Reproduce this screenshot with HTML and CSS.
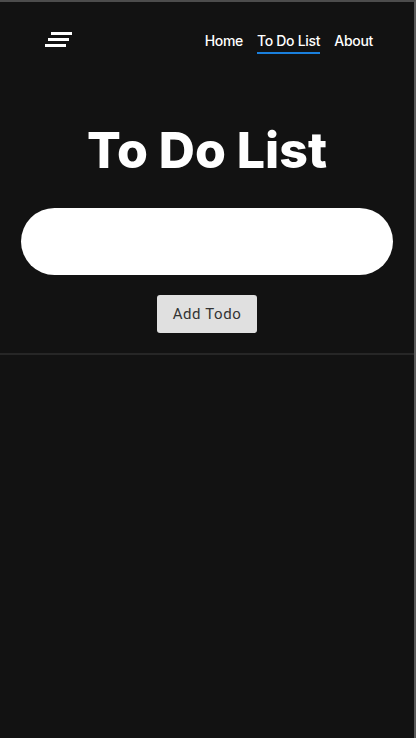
FILE: index.html
```html
<!DOCTYPE html>
<html lang="en">
<head>
<meta charset="utf-8">
<title>To Do List</title>
<link rel="stylesheet" href="styles.css">
</head>
<body>
<div class="frame">
  <header class="topbar">
    <button class="menu" aria-label="Menu">
      <svg width="27" height="15" viewBox="0 0 27 15">
        <rect x="6" y="0" width="21" height="3" fill="#fff"/>
        <rect x="3" y="6" width="21" height="3" fill="#fff"/>
        <rect x="0" y="12" width="21" height="3" fill="#fff"/>
      </svg>
    </button>
    <nav class="nav">
      <a class="nav-link" href="#">Home</a>
      <a class="nav-link active" href="#">To Do List</a>
      <a class="nav-link" href="#">About</a>
    </nav>
  </header>
  <section class="hero">
    <h1 class="title">To Do List</h1>
    <input class="todo-input" type="text" aria-label="New todo">
    <button class="add-btn">Add Todo</button>
  </section>
</div>
</body>
</html>
```
FILE: styles.css
```css
html, body {
  margin: 0;
  padding: 0;
  background: #121212;
}
.frame {
  min-height: 738px;
  box-sizing: border-box;
  border-top: 2px solid #4c4c4c;
  border-right: 2px solid #5a5a5a;
  font-family: Inter, "Noto Sans", sans-serif;
}
.topbar {
  display: flex;
  justify-content: space-between;
  align-items: flex-start;
  padding: 29px 41px 0 45px;
}
.menu {
  background: none;
  border: 0;
  padding: 0;
  margin-top: 1px;
  display: block;
  line-height: 0;
}
.nav {
  display: flex;
  gap: 14px;
}
.nav-link {
  color: #fff;
  text-decoration: none;
  font-size: 14px;
  font-weight: 500;
  line-height: 20px;
  letter-spacing: -0.3px;
  padding-bottom: 1px;
  border-bottom: 2px solid transparent;
}
.nav-link.active {
  border-bottom-color: #1a7fdc;
}
.hero {
  display: flex;
  flex-direction: column;
  align-items: center;
  padding: 0 21px 20px;
  border-bottom: 2px solid #262626;
}
.title {
  margin: 67px 0 29px;
  color: #fff;
  font-size: 50px;
  font-weight: 800;
  line-height: 58px;
  letter-spacing: 0;
}
.todo-input {
  width: 100%;
  height: 67px;
  box-sizing: border-box;
  border: 0;
  border-radius: 34px;
  background: #fff;
  outline: none;
}
.add-btn {
  margin-top: 20px;
  width: 100px;
  height: 38px;
  border: 0;
  border-radius: 3px;
  background: #e0e0e0;
  color: #333;
  font-family: Roboto, sans-serif;
  font-size: 15px;
  letter-spacing: 0.6px;
}
```
